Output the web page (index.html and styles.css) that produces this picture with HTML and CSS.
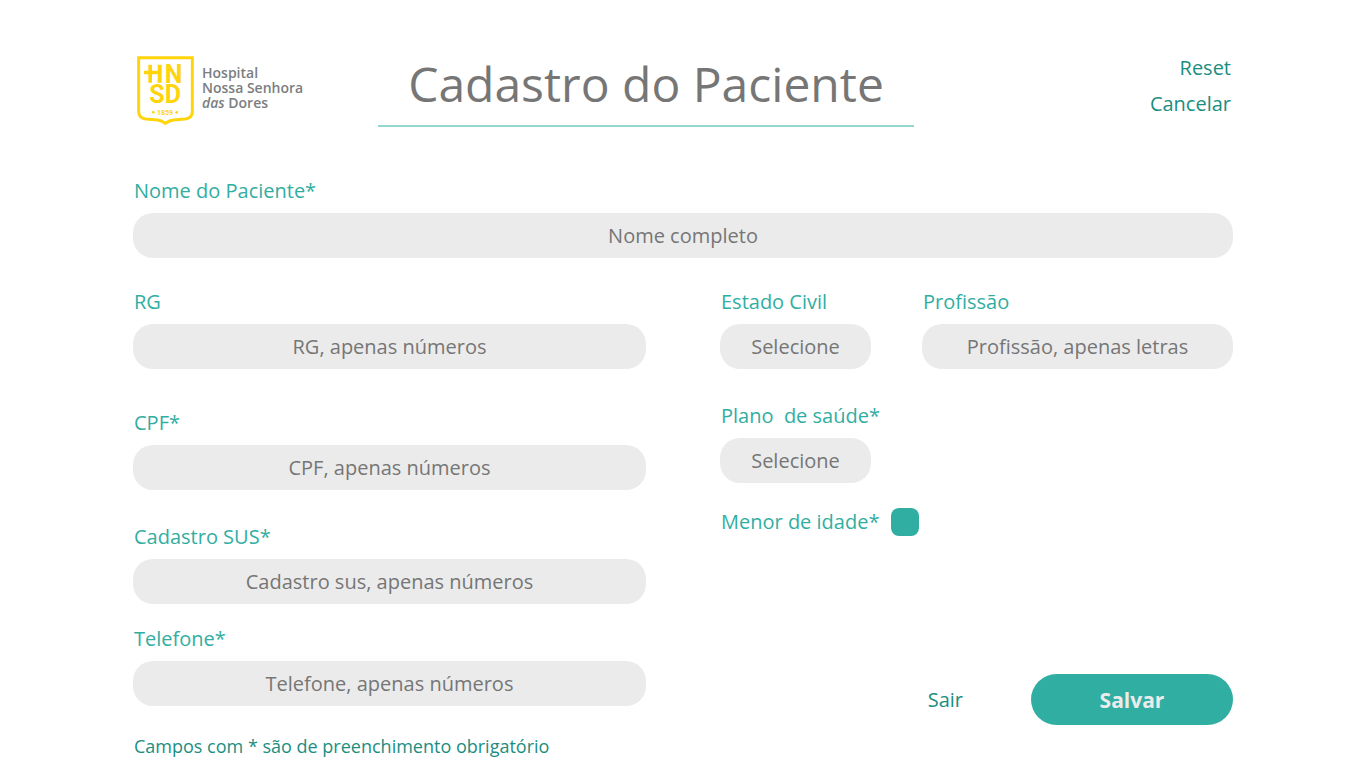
FILE: index.html
```html
<!DOCTYPE html>
<html lang="pt-BR">
<head>
<meta charset="utf-8">
<meta name="viewport" content="width=device-width, initial-scale=1">
<title>Cadastro do Paciente</title>
<link rel="stylesheet" href="styles.css">
</head>
<body>
<form class="page">
  <header class="header">
    <div class="brand">
      <svg class="shield" viewBox="22 18 171 210" aria-hidden="true">
        <path class="shield-outline" d="M27 23H188V185Q188 204 166 207L131 210Q120 211 107 220Q95 211 84 210L49 207Q27 204 27 185Z"/>
        <path class="shield-cross" d="M43 62H56V44H67V62H84V44H96V98H84V73H67V98H56V73H43Z"/>
        <text class="shield-letter" x="105" y="98">N</text>
        <text class="shield-letter" x="59" y="160">S</text>
        <text class="shield-letter" x="105" y="160">D</text>
        <text class="shield-year" x="106" y="194">1859</text>
        <circle class="shield-dot" cx="71" cy="187" r="4"/>
        <circle class="shield-dot" cx="141" cy="187" r="4"/>
      </svg>
      <p class="brand-name">Hospital<br>Nossa Senhora<br><em>das</em> Dores</p>
    </div>
    <h1 class="title">Cadastro do Paciente</h1>
    <nav class="links">
      <button class="link" type="reset">Reset</button>
      <a class="link" href="#cancelar">Cancelar</a>
    </nav>
  </header>

  <div class="field">
    <label for="nome">Nome do Paciente*</label>
    <input class="control" id="nome" type="text" placeholder="Nome completo">
  </div>

  <div class="columns">
    <div class="column">
      <div class="field field-rg">
        <label for="rg">RG</label>
        <input class="control" id="rg" type="text" placeholder="RG, apenas números">
      </div>
      <div class="field field-cpf">
        <label for="cpf">CPF*</label>
        <input class="control" id="cpf" type="text" placeholder="CPF, apenas números">
      </div>
      <div class="field field-sus">
        <label for="sus">Cadastro SUS*</label>
        <input class="control" id="sus" type="text" placeholder="Cadastro sus, apenas números">
      </div>
      <div class="field">
        <label for="telefone">Telefone*</label>
        <input class="control" id="telefone" type="tel" placeholder="Telefone, apenas números">
      </div>
      <p class="note">Campos com * são de preenchimento obrigatório</p>
    </div>

    <div class="column">
      <div class="pair">
        <div class="field">
          <label for="civil">Estado Civil</label>
          <select class="control" id="civil"><option>Selecione</option></select>
        </div>
        <div class="field">
          <label for="profissao">Profissão</label>
          <input class="control" id="profissao" type="text" placeholder="Profissão, apenas letras">
        </div>
      </div>
      <div class="pair">
        <div class="field">
          <label for="plano">Plano&nbsp; de saúde*</label>
          <select class="control" id="plano"><option>Selecione</option></select>
        </div>
      </div>
      <div class="check">
        <label for="menor">Menor de idade*</label>
        <input class="checkbox" id="menor" type="checkbox">
      </div>
      <div class="actions">
        <a class="link" href="#sair">Sair</a>
        <button class="save" type="submit">Salvar</button>
      </div>
    </div>
  </div>
</form>
</body>
</html>
```

FILE: styles.css
```css
* {
  box-sizing: border-box;
}

body {
  margin: 0;
  background: #fff;
  color: #767676;
  font-family: "Open Sans", "Noto Sans", sans-serif;
  font-size: 20px;
  line-height: 28px;
}

.page {
  max-width: 1366px;
  margin: 0 auto;
  padding: 54px 133px 8px;
}

.header {
  display: grid;
  grid-template-columns: 245px minmax(0, 536px) 1fr;
  align-items: start;
  margin-bottom: 50px;
}

.brand {
  display: flex;
  gap: 8px;
  padding: 2px 4px 0;
}

.shield {
  width: 57px;
  height: 70px;
}

.shield-outline {
  fill: none;
  stroke: #ffd40b;
  stroke-width: 9;
}

.shield-cross,
.shield-dot {
  fill: #ffd40b;
}

.shield-letter,
.shield-year {
  fill: #ffd40b;
  font-family: Roboto, sans-serif;
  font-weight: 700;
}

.shield-letter {
  font-size: 75px;
}

.shield-year {
  font-size: 21px;
  text-anchor: middle;
}

.brand-name {
  margin: 9px 0 0;
  color: #7b7e81;
  font-size: 14px;
  font-weight: 600;
  line-height: 15px;
  white-space: nowrap;
}

.title {
  margin: 0;
  padding-bottom: 11px;
  border-bottom: 2px solid #95d8d0;
  font-size: 48px;
  font-weight: 400;
  line-height: 60px;
  text-align: center;
}

.links {
  display: flex;
  flex-direction: column;
  align-items: flex-end;
  gap: 8px;
  padding-right: 2px;
}

.link {
  padding: 0;
  border: 0;
  background: none;
  color: #1a8e81;
  font: inherit;
  text-decoration: none;
  cursor: pointer;
}

.field {
  display: flex;
  flex-direction: column;
  gap: 8px;
}

label {
  padding-left: 1px;
  color: #31aea2;
  white-space: nowrap;
}

.control {
  width: 100%;
  height: 45px;
  padding: 0 16px;
  border: 0;
  border-radius: 20px;
  background: #ebebeb;
  color: #767676;
  font: inherit;
  text-align: center;
  text-align-last: center;
  appearance: none;
}

.control::placeholder {
  color: #767676;
  opacity: 1;
}

.columns {
  display: grid;
  grid-template-columns: 1fr 1fr;
  gap: 74px;
  margin-top: 30px;
}

.column {
  display: flex;
  flex-direction: column;
}

.field-rg {
  margin-bottom: 40px;
}

.field-cpf {
  margin-bottom: 33px;
}

.field-sus {
  margin-bottom: 21px;
}

.note {
  margin: 26px 0 0;
  padding-left: 1px;
  color: #1a8e81;
  font-size: 18px;
}

.pair {
  display: grid;
  grid-template-columns: 151px 1fr;
  gap: 51px;
  margin-bottom: 33px;
}

.check {
  display: flex;
  align-items: center;
  gap: 12px;
  margin-top: -8px;
}

.checkbox {
  width: 28px;
  height: 28px;
  margin: 0;
  border-radius: 8px;
  background: #31aea2;
  appearance: none;
}

.actions {
  display: flex;
  justify-content: flex-end;
  align-items: center;
  gap: 68px;
  margin-top: auto;
  padding-bottom: 35px;
}

.save {
  width: 202px;
  height: 51px;
  border: 0;
  border-radius: 26px;
  background: #31aea2;
  color: #ebebeb;
  font: inherit;
  font-size: 21px;
  font-weight: 700;
  cursor: pointer;
}
```
